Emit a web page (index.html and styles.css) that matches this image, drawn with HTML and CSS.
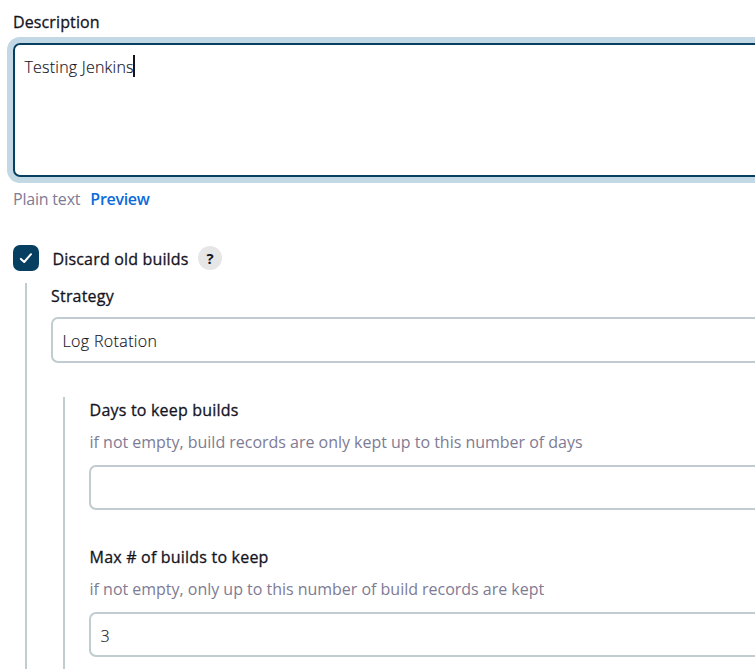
FILE: index.html
```html
<!DOCTYPE html>
<html lang="en">
<head>
<meta charset="utf-8">
<title>Job configuration</title>
<link rel="stylesheet" href="styles.css">
</head>
<body>
<main class="form">
  <div class="label label-description">Description</div>
  <div class="textarea"><span class="typed">Testing Jenkins</span><span class="caret"></span></div>
  <div class="preview-row"><span class="format">Plain text</span><a class="preview">Preview</a></div>
  <div class="check-row">
    <span class="checkbox"><svg width="26" height="26" viewBox="0 0 26 26" fill="none"><path d="M7.9 13.9 11.2 17 18 9.2" stroke="#fff" stroke-width="2" stroke-linecap="round" stroke-linejoin="round"/></svg></span>
    <span class="label check-label">Discard old builds</span>
    <span class="help">?</span>
  </div>
  <section class="nested nested-outer">
    <div class="label">Strategy</div>
    <div class="input select">Log Rotation</div>
    <section class="nested nested-inner">
      <div class="label field-text">Days to keep builds</div>
      <div class="hint field-text">if not empty, build records are only kept up to this number of days</div>
      <div class="input"></div>
      <div class="label label-next field-text">Max # of builds to keep</div>
      <div class="hint field-text">if not empty, only up to this number of build records are kept</div>
      <div class="input">3</div>
    </section>
  </section>
</main>
</body>
</html>
```
FILE: styles.css
```css
* { box-sizing: border-box; }
html, body { margin: 0; height: 669px; overflow: hidden; background: #fff; }
body {
  font-family: "Open Sans", "Noto Sans", sans-serif;
  font-size: 16px;
  line-height: 24px;
  color: #14141f;
  white-space: nowrap;
}
.form { width: 790px; height: 669px; padding: 10px 0 0 13px; overflow: hidden; }
.label { height: 24px; letter-spacing: 0.2px; -webkit-text-stroke: 0.3px currentColor; }
.label-description { margin-bottom: 9px; letter-spacing: 0.12px; }
.textarea {
  display: flex;
  align-items: flex-start;
  height: 134px;
  padding: 10px 9.5px;
  border: 2px solid #063f60;
  border-radius: 7px;
  box-shadow: 0 0 0 6px #c2d9e5;
  font-weight: 300;
  letter-spacing: 0.22px;
  -webkit-text-stroke: 0.15px currentColor;
}
.typed { margin-right: -1px; }
.caret { width: 2px; height: 22px; background: #14141f; }
.preview-row { display: flex; gap: 10px; height: 24px; margin-top: 10px; color: #7e7b94; }
.format { letter-spacing: -0.2px; }
.preview { color: #0b6bdb; font-weight: 600; letter-spacing: -0.3px; }
.check-row { display: flex; align-items: center; height: 26px; margin-top: 34px; }
.checkbox { width: 26px; height: 26px; background: #063f60; border-radius: 7px; }
.checkbox svg { display: block; }
.check-label { margin: 2px 0 0 13.5px; letter-spacing: 0.17px; }
.help {
  width: 24px;
  height: 24px;
  margin-left: 9.5px;
  border-radius: 50%;
  background: #e6e6e6;
  font-size: 15px;
  font-weight: 700;
  text-align: center;
}
.nested { border-left: 2px solid #c0cccf; padding-left: 24px; }
.nested-outer { height: 400px; margin: 12px 0 0 12px; padding-top: 1px; }
.nested-inner { height: 300px; margin: 34px 0 0 12px; padding-top: 1px; }
.field-text { padding-left: 0.6px; }
.input {
  height: 45px;
  padding: 10px 9.5px;
  border: 2px solid #c0cccf;
  border-radius: 7px;
  font-weight: 300;
  letter-spacing: 0.36px;
  -webkit-text-stroke: 0.15px currentColor;
}
.select { height: 46px; margin-top: 9px; }
.hint { height: 24px; margin: 8px 0 11px; color: #7e7b94; letter-spacing: -0.02px; }
.label-next { margin-top: 35px; }
```
